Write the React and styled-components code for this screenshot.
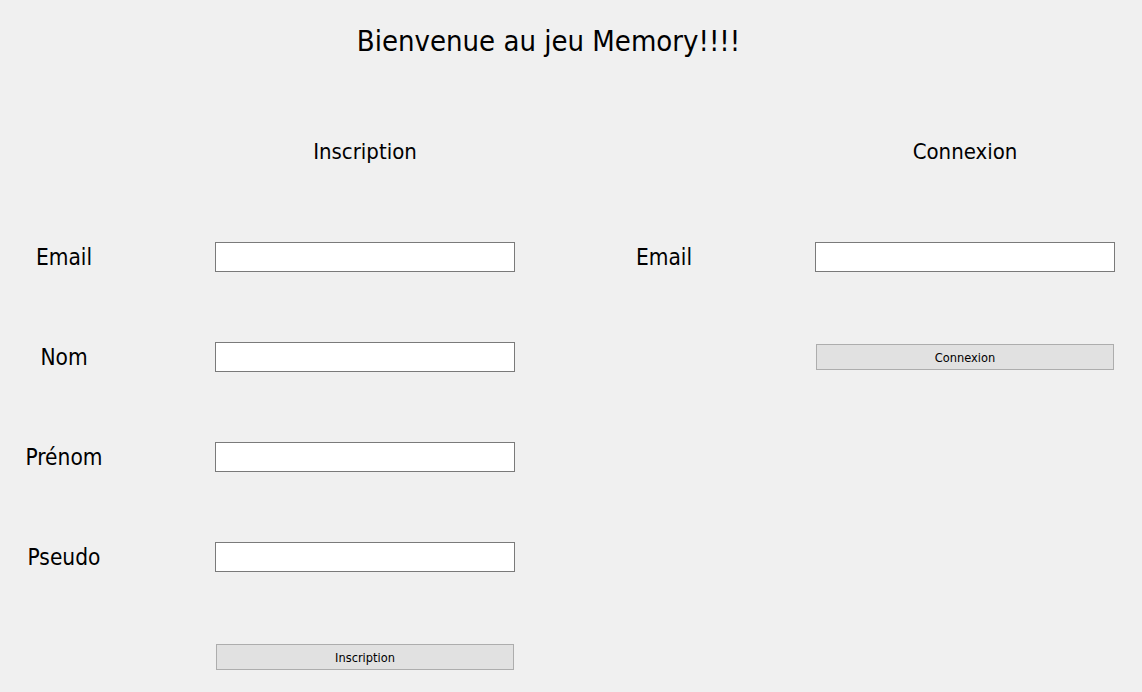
import React from 'react';
import styled, { createGlobalStyle } from 'styled-components';

const GlobalStyle = createGlobalStyle`
  html, body {
    margin: 0;
    padding: 0;
    background: #f0f0f0;
    height: 100%;
  }
  body {
    font-family: "DejaVu Sans Condensed", "DejaVu Sans", Tahoma, sans-serif;
    color: #000;
  }
`;

const Window = styled.div`
  width: 1142px;
  height: 692px;
  overflow: hidden;
  background: #f0f0f0;
`;

const Title = styled.h1`
  margin: 0;
  width: 1097px;
  height: 82px;
  line-height: 82px;
  text-align: center;
  font-size: 29px;
  font-weight: normal;
`;

const Panels = styled.div`
  display: flex;
  margin-top: 20px;
`;

const Panel = styled.section`
  width: 600px;
  flex: none;
  display: grid;
  grid-template-columns: 128px 300px;
  grid-template-rows: 105px;
  column-gap: 87px;
  grid-auto-rows: 100px;
`;

const Heading = styled.h2`
  grid-column: 2;
  margin: 0;
  height: 100px;
  line-height: 100px;
  text-align: center;
  font-size: 22px;
  font-weight: normal;
`;

const Label = styled.label`
  grid-column: 1;
  display: flex;
  align-items: center;
  justify-content: center;
  font-size: 22.5px;
`;

const Cell = styled.div`
  grid-column: 2;
  display: flex;
  align-items: center;
`;

const Field = styled.input`
  box-sizing: border-box;
  width: 300px;
  height: 30px;
  margin: 0;
  border: 1px solid #7a7a7a;
  background: #fff;
  outline: none;
`;

const Button = styled.button`
  box-sizing: border-box;
  width: 298px;
  height: 26px;
  margin: 0 1px;
  padding: 0;
  border: 1px solid #adadad;
  background: #e1e1e1;
  font-family: inherit;
  font-size: 12.7px;
  color: #000;
`;

function Row({ label, children }) {
  return (
    <>
      {label ? <Label>{label}</Label> : null}
      <Cell>{children}</Cell>
    </>
  );
}

export default function App() {
  return (
    <Window>
      <GlobalStyle />
      <Title>Bienvenue au jeu Memory!!!!</Title>
      <Panels>
        <Panel>
          <Heading>Inscription</Heading>
          <Row label="Email"><Field /></Row>
          <Row label="Nom"><Field /></Row>
          <Row label="Prénom"><Field /></Row>
          <Row label="Pseudo"><Field /></Row>
          <Row><Button>Inscription</Button></Row>
        </Panel>
        <Panel>
          <Heading>Connexion</Heading>
          <Row label="Email"><Field /></Row>
          <Row><Button>Connexion</Button></Row>
        </Panel>
      </Panels>
    </Window>
  );
}
